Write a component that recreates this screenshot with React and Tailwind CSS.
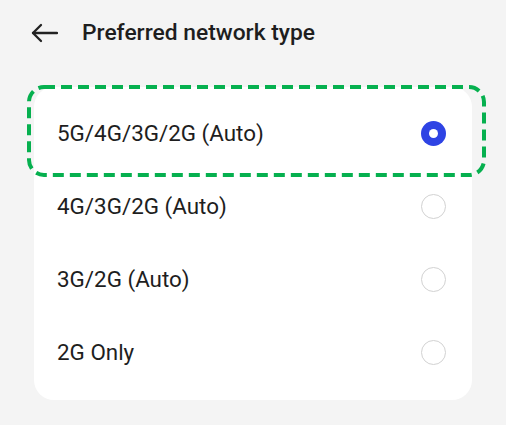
import React, { useState } from 'react';

const options = [
    '5G/4G/3G/2G (Auto)',
    '4G/3G/2G (Auto)',
    '3G/2G (Auto)',
    '2G Only',
];

const Radio = ({ checked }) =>
    checked ? (
        <span className="w-[25px] h-[25px] rounded-full bg-[#2e43e4] flex items-center justify-center">
            <span className="w-[9px] h-[9px] rounded-full bg-white" />
        </span>
    ) : (
        <span className="w-[25px] h-[25px] rounded-full border-[1.5px] border-[#d2d2d2] bg-white" />
    );

const App = () => {
    const [selected, setSelected] = useState(0);

    return (
        <div className="w-[506px] h-[425px] bg-[#f4f4f4] overflow-hidden font-['Roboto',sans-serif] text-[#1e1e1e]">
            {/* Header */}
            <div className="flex items-center h-[66px] pl-[31px]">
                <svg width="27" height="20" viewBox="0 0 27 20" fill="none" stroke="#222" strokeWidth="2.3" strokeLinecap="round" strokeLinejoin="round">
                    <path d="M26 10H2" />
                    <path d="M10 2L2 10l8 8" />
                </svg>
                <h1 className="ml-[24px] text-[22.8px] font-medium leading-none">Preferred network type</h1>
            </div>

            {/* Options card */}
            <div className="relative mt-[21px] ml-[34px] w-[438px] bg-white rounded-[20px] pt-[10px] pb-[11px]">
                {options.map((label, i) => (
                    <button
                        key={label}
                        onClick={() => setSelected(i)}
                        className="w-full h-[73px] flex items-center justify-between pl-[23px] pr-[26px] text-left"
                    >
                        <span className="text-[22.4px] leading-none">{label}</span>
                        <Radio checked={selected === i} />
                    </button>
                ))}

                {/* highlight around the selected row */}
                <svg
                    className="absolute pointer-events-none"
                    style={{ left: -7, top: 10 + selected * 73 - 12, width: 459, height: 92 }}
                    viewBox="0 0 459 92"
                    fill="none"
                >
                    <rect x="2" y="2" width="455" height="88" rx="15" stroke="#06b04f" strokeWidth="4" strokeDasharray="11 6" />
                </svg>
            </div>
        </div>
    );
};

export default App;
